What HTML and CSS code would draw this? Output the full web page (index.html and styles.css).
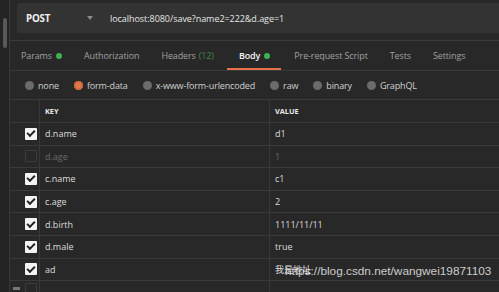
FILE: index.html
```html
<html>
    <head>
        <title>Postman - form-data</title>
        <link rel="stylesheet" href="styles.css">
    </head>
    <body>
        <div class="app">
            <div class="gutter"><div class="thumb"></div></div>

            <div class="main">
                <div class="urlbar">
                    <div class="method">POST <span class="caret"></span></div>
                    <div class="url">localhost:8080/save?name2=222&amp;d.age=1</div>
                </div>

                <div class="tabs">
                    <div class="tab">Params <span class="dot"></span></div>
                    <div class="tab">Authorization</div>
                    <div class="tab">Headers <span class="count">(12)</span></div>
                    <div class="tab active">Body <span class="dot"></span></div>
                    <div class="tab">Pre-request Script</div>
                    <div class="tab">Tests</div>
                    <div class="tab">Settings</div>
                </div>

                <div class="modes">
                    <label class="mode"><span class="radio"></span>none</label>
                    <label class="mode"><span class="radio on"></span>form-data</label>
                    <label class="mode"><span class="radio"></span>x-www-form-urlencoded</label>
                    <label class="mode"><span class="radio"></span>raw</label>
                    <label class="mode"><span class="radio"></span>binary</label>
                    <label class="mode"><span class="radio"></span>GraphQL</label>
                </div>

                <div class="table">
                    <div class="row head">
                        <div class="cell check"></div>
                        <div class="cell key">KEY</div>
                        <div class="cell value">VALUE</div>
                    </div>
                    <div class="row">
                        <div class="cell check"><span class="box"></span></div>
                        <div class="cell key">d.name</div>
                        <div class="cell value">d1</div>
                    </div>
                    <div class="row off">
                        <div class="cell check"><span class="box"></span></div>
                        <div class="cell key">d.age</div>
                        <div class="cell value">1</div>
                    </div>
                    <div class="row">
                        <div class="cell check"><span class="box"></span></div>
                        <div class="cell key">c.name</div>
                        <div class="cell value">c1</div>
                    </div>
                    <div class="row">
                        <div class="cell check"><span class="box"></span></div>
                        <div class="cell key">c.age</div>
                        <div class="cell value">2</div>
                    </div>
                    <div class="row">
                        <div class="cell check"><span class="box"></span></div>
                        <div class="cell key">d.birth</div>
                        <div class="cell value">1111/11/11</div>
                    </div>
                    <div class="row">
                        <div class="cell check"><span class="box"></span></div>
                        <div class="cell key">d.male</div>
                        <div class="cell value">true</div>
                    </div>
                    <div class="row">
                        <div class="cell check"><span class="box"></span></div>
                        <div class="cell key">ad</div>
                        <div class="cell value cjk">我是地址</div>
                    </div>
                    <div class="row off new">
                        <div class="cell check"><span class="handle"></span><span class="box"></span></div>
                        <div class="cell key"></div>
                        <div class="cell value"></div>
                    </div>
                </div>
            </div>
        </div>

        <div class="watermark">https://blog.csdn.net/wangwei19871103</div>
    </body>
</html>
```

FILE: styles.css
```css
* {
    box-sizing: border-box;
    font-family: 'Open Sans', sans-serif;
}

body {
    margin: 0;
    width: 499px;
    height: 292px;
    overflow: hidden;
    background-color: #282828;
    color: #d4d4d4;
    font-size: 9px;
    position: relative;
}

.app {
    display: flex;
    height: 292px;
}

.gutter {
    width: 10px;
    flex: none;
    background-color: #232323;
    border-right: 1px solid #383838;
    padding: 18px 0 0 3px;
}

.thumb {
    width: 4px;
    height: 30px;
    border-radius: 2px;
    background-color: #585858;
}

.main {
    flex: 1;
    min-width: 0;
}

/* request line */
.urlbar {
    display: flex;
    align-items: center;
    height: 30px;
    margin: 3px 0 0 7px;
    background-color: #333333;
    border-radius: 2px 0 0 2px;
    white-space: nowrap;
}

.method {
    width: 93px;
    padding-left: 9px;
    font-weight: 700;
    font-size: 9.8px;
    letter-spacing: -0.2px;
    color: #f0f0f0;
    display: flex;
    align-items: center;
}

.caret {
    margin-left: auto;
    margin-right: 17px;
    width: 0;
    height: 0;
    border-left: 3px solid transparent;
    border-right: 3px solid transparent;
    border-top: 4px solid #8a8a8a;
}

.url {
    color: #e6e6e6;
    letter-spacing: -0.05px;
}

/* tabs */
.tabs {
    display: flex;
    align-items: center;
    height: 31px;
    margin-top: 7px;
    border-top: 1px solid #3a3a3a;
    border-bottom: 1px solid #3a3a3a;
    padding-left: 11px;
    white-space: nowrap;
    letter-spacing: -0.12px;
}

.tab {
    height: 100%;
    display: flex;
    align-items: center;
    flex: none;
    color: #a0a0a0;
    margin-right: 22px;
    position: relative;
}

.tab.active {
    color: #f4f4f4;
    font-weight: 600;
    padding: 0 11px 0 12px;
    margin-left: -9px;
    margin-right: 13px;
}

.tab.active::after {
    content: "";
    position: absolute;
    left: 0;
    right: 0;
    bottom: 0;
    height: 2px;
    background-color: #e8734a;
}

.dot {
    width: 6px;
    height: 6px;
    border-radius: 50%;
    background-color: #3cb455;
    margin-left: 4px;
}

.count {
    color: #3d8a52;
    margin-left: 3px;
}

/* body modes */
.modes {
    display: flex;
    align-items: center;
    height: 29px;
    padding-left: 15px;
    border-bottom: 1px solid #3a3a3a;
    white-space: nowrap;
    letter-spacing: -0.15px;
}

.mode {
    display: flex;
    align-items: center;
    color: #d0d0d0;
    margin-right: 15px;
}

.radio {
    width: 9px;
    height: 9px;
    border-radius: 50%;
    background-color: #6b6b6b;
    margin-right: 4px;
}

.radio.on {
    background-color: #e07a4c;
    box-shadow: inset 0 0 0 1.5px #c9653c;
}

/* key/value table */
.table {
    display: flex;
    flex-direction: column;
}

.row {
    display: flex;
    height: 22.6px;
    border-bottom: 1px solid #3a3a3a;
}

.cell {
    display: flex;
    align-items: center;
    color: #dcdcdc;
}

.check {
    width: 30px;
    padding-left: 15px;
    border-right: 1px solid #383838;
    position: relative;
}

.key {
    width: 230px;
    padding-left: 5px;
    border-right: 1px solid #383838;
}

.value {
    flex: 1;
    padding-left: 5px;
}

.head {
    height: 23px;
}

.head .cell {
    font-size: 7.3px;
    font-weight: 700;
    color: #e8e8e8;
}

.box {
    width: 12px;
    height: 12px;
    border-radius: 1px;
    background-color: #f4f4f4;
    display: flex;
    align-items: center;
    justify-content: center;
}

.box::after {
    content: "";
    width: 6px;
    height: 3px;
    border-left: 2px solid #222;
    border-bottom: 2px solid #222;
    transform: translateY(-1px) rotate(-45deg);
}

.off .box {
    background-color: transparent;
    border: 1px solid #3c3c3c;
}

.off .box::after {
    display: none;
}

.off .cell {
    color: #6a6a6a;
}

.new .cell {
    align-items: flex-start;
    padding-top: 2px;
}

.handle {
    position: absolute;
    left: 3px;
    top: 6px;
    width: 7px;
    height: 3px;
    background-color: #777;
}

.cjk {
    font-family: 'Noto Sans CJK SC', sans-serif;
}

.watermark {
    position: absolute;
    left: 285px;
    top: 264px;
    font-family: 'Liberation Sans', Arial, sans-serif;
    font-size: 11.8px;
    color: rgba(235, 235, 235, 0.85);
    white-space: nowrap;
}
```
